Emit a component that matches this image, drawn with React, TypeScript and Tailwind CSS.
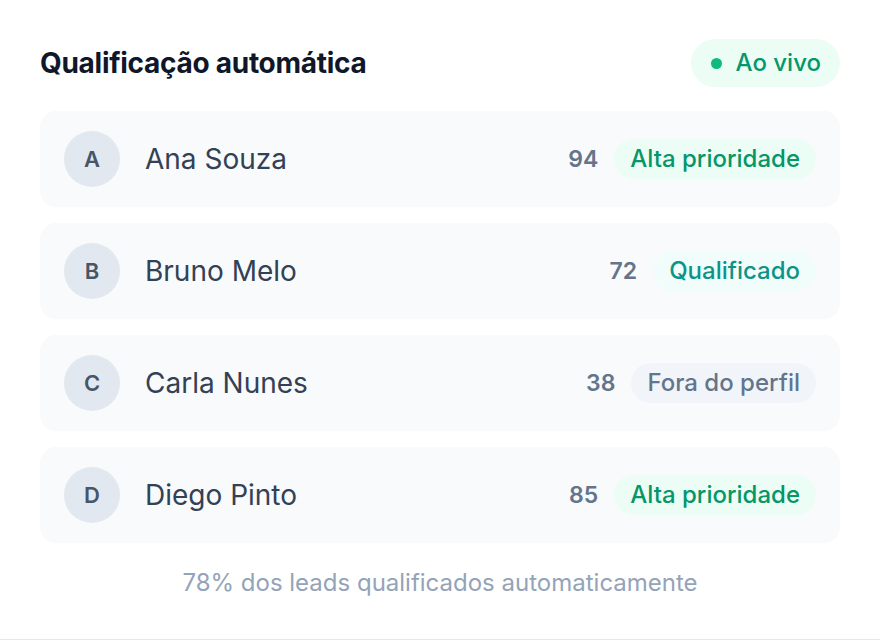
const leads = [
  { initial: 'A', name: 'Ana Souza', score: 94, status: 'Alta prioridade', tone: 'high' },
  { initial: 'B', name: 'Bruno Melo', score: 72, status: 'Qualificado', tone: 'ok' },
  { initial: 'C', name: 'Carla Nunes', score: 38, status: 'Fora do perfil', tone: 'out' },
  { initial: 'D', name: 'Diego Pinto', score: 85, status: 'Alta prioridade', tone: 'high' },
];

const badgeTone: Record<string, string> = {
  high: 'bg-[#ecfdf5] text-[#059669]',
  ok: 'bg-[#f0fdfa] text-[#0d9488]',
  out: 'bg-[#f1f5f9] text-[#64748b]',
};

export default function App() {
  return (
    <div
      className="h-[640px] w-full bg-white border-b border-[#e5e7eb] px-10 pt-[39px]"
      style={{ fontFamily: 'Inter, "Noto Sans", sans-serif' }}
    >
      <div className="flex items-center justify-between">
        <h2 className="text-[28px] font-bold text-[#0f172a] tracking-[-0.01em]">Qualificação automática</h2>
        <div className="flex h-12 items-center gap-3.5 rounded-full bg-[#ecfdf5] pl-5 pr-[19px] text-[24px] font-medium text-[#059669]">
          <span className="h-[11px] w-[11px] rounded-full bg-[#10b981]" />
          Ao vivo
        </div>
      </div>

      <div className="mt-6 flex flex-col gap-4">
        {leads.map((lead) => (
          <div key={lead.initial} className="flex h-24 items-center rounded-2xl bg-[#f8fafc] pl-6 pr-6">
            <div className="flex h-14 w-14 shrink-0 items-center justify-center rounded-full bg-[#e2e8f0] text-[22px] font-semibold text-[#475569]">
              {lead.initial}
            </div>
            <span className="ml-[25px] text-[28px] text-[#334155]">{lead.name}</span>
            <div className="ml-auto flex items-center gap-4">
              <span className="text-[23px] font-semibold text-[#64748b]">{lead.score}</span>
              <span className={`flex h-10 items-center rounded-full px-4 text-[24px] font-medium ${badgeTone[lead.tone]}`}>
                {lead.status}
              </span>
            </div>
          </div>
        ))}
      </div>

      <p className="mt-[22px] text-center text-[24px] text-[#94a3b8]">78% dos leads qualificados automaticamente</p>
    </div>
  );
}
